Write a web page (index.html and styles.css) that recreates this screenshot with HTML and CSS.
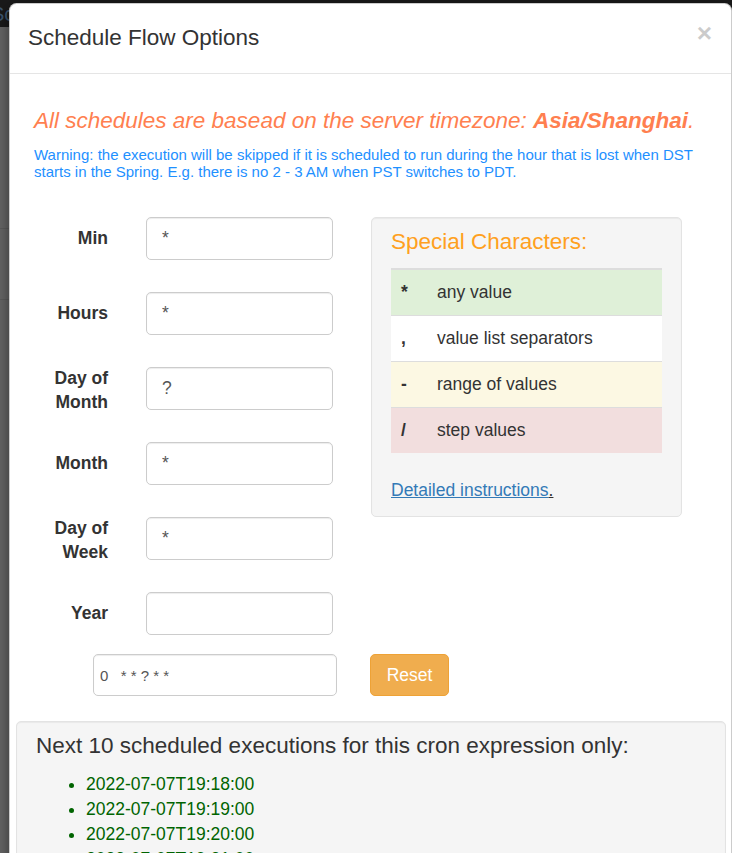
FILE: index.html
```html
<!DOCTYPE html>
<html lang="en">
<head>
<meta charset="utf-8">
<title>Schedule Flow Options</title>
<link rel="stylesheet" href="styles.css">
</head>
<body>
<div class="backdrop">
  <div class="navbar"><span class="brand">Sc</span></div>
  <div class="page">
    <div class="pg-line l1"></div>
    <div class="pg-line l2"></div>
  </div>
</div>

<div class="modal">
  <div class="modal-header">
    <h4 class="modal-title">Schedule Flow Options</h4>
    <button class="close" type="button">&times;</button>
  </div>
  <div class="modal-body">
    <div class="intro">
      <h4 class="tz">All schedules are basead on the server timezone: <b>Asia/Shanghai</b>.</h4>
      <p class="warn">Warning: the execution will be skipped if it is scheduled to run during the hour that is lost when DST starts in the Spring. E.g. there is no 2 - 3 AM when PST switches to PDT.</p>
    </div>

    <div class="cron-section">
      <div class="fields">
        <div class="field"><label>Min</label><input class="form-control" type="text" value="*"></div>
        <div class="field"><label>Hours</label><input class="form-control" type="text" value="*"></div>
        <div class="field"><label class="two">Day of Month</label><input class="form-control" type="text" value="?"></div>
        <div class="field"><label>Month</label><input class="form-control" type="text" value="*"></div>
        <div class="field"><label class="two">Day of Week</label><input class="form-control" type="text" value="*"></div>
        <div class="field"><label>Year</label><input class="form-control" type="text" value=""></div>
      </div>

      <div class="well special">
        <h4 class="special-title">Special Characters:</h4>
        <table class="chars">
          <tr class="success"><td class="ch">*</td><td>any value</td></tr>
          <tr><td class="ch">,</td><td>value list separators</td></tr>
          <tr class="warning"><td class="ch">-</td><td>range of values</td></tr>
          <tr class="danger"><td class="ch">/</td><td>step values</td></tr>
        </table>
        <p class="more"><a href="#">Detailed instructions</a><span class="dot">.</span></p>
      </div>
    </div>

    <div class="cron-row">
      <input class="cron-input" type="text" value="0   * * ? * *">
      <button class="btn-reset" type="button">Reset</button>
    </div>

    <div class="well next">
      <h4 class="next-title">Next 10 scheduled executions for this cron expression only:</h4>
      <ul class="times">
        <li>2022-07-07T19:18:00</li>
        <li>2022-07-07T19:19:00</li>
        <li>2022-07-07T19:20:00</li>
        <li>2022-07-07T19:21:00</li>
        <li>2022-07-07T19:22:00</li>
        <li>2022-07-07T19:23:00</li>
        <li>2022-07-07T19:24:00</li>
        <li>2022-07-07T19:25:00</li>
        <li>2022-07-07T19:26:00</li>
        <li>2022-07-07T19:27:00</li>
      </ul>
    </div>
  </div>
</div>
</body>
</html>
```

FILE: styles.css
```css
* { box-sizing: border-box; }

html, body {
  margin: 0;
  padding: 0;
}

body {
  height: 853px;
  overflow: hidden;
  background: #666666;
  font-family: "Liberation Sans", Arial, Helvetica, sans-serif;
  font-size: 17.5px;
  line-height: 25px;
  color: #333333;
}

/* dimmed page behind the modal */
.navbar {
  height: 27px;
  background: #1a1a1a;
  overflow: hidden;
  white-space: nowrap;
}

.brand {
  display: inline-block;
  margin-left: -9px;
  margin-top: 4px;
  font-size: 20px;
  line-height: 20px;
  color: #3c5670;
}

.page {
  padding-top: 201px;
}

.pg-line {
  height: 1px;
  background: #5c5c5c;
}

.pg-line.l2 { margin-top: 70px; }

/* modal */
.modal {
  position: absolute;
  top: 3px;
  left: 9px;
  width: 723px;
  height: 900px;
  background: #ffffff;
  border: 1px solid rgba(0, 0, 0, 0.2);
  border-radius: 7.5px;
  box-shadow: 0 5px 15px rgba(0, 0, 0, 0.5);
}

.modal-header {
  display: flex;
  justify-content: space-between;
  align-items: flex-start;
  height: 70px;
  padding: 21px 19px 0 18px;
  border-bottom: 1px solid #e5e5e5;
}

.modal-title {
  margin: 0;
  font-size: 22.5px;
  line-height: 25px;
  font-weight: normal;
  color: #333333;
}

.close {
  margin-top: -5.5px;
  padding: 0;
  border: 0;
  background: transparent;
  font-family: "Liberation Sans", Arial, sans-serif;
  font-size: 26.25px;
  line-height: 26.25px;
  font-weight: bold;
  color: #000000;
  opacity: 0.2;
}

.modal-body {
  padding: 0 5px 30px 6px;
}

.intro {
  padding: 34px 0 0 18px;
  width: 690px;
}

.tz {
  margin: 0;
  font-size: 22.5px;
  line-height: 25px;
  font-style: italic;
  font-weight: normal;
  color: #ff7f50;
}

.tz b { font-weight: bold; }

.warn {
  margin: 14px 0 0;
  font-size: 15px;
  line-height: 16.5px;
  color: #1e90ff;
}

/* cron fields + special characters */
.cron-section {
  display: flex;
  align-items: flex-start;
  margin-top: 37px;
  padding-left: 18px;
}

.fields {
  display: flex;
  flex-direction: column;
  gap: 32.5px;
  width: 299px;
}

.field {
  display: flex;
  align-items: center;
  height: 42.5px;
}

.field label {
  width: 74px;
  margin-right: 38px;
  text-align: right;
  font-weight: bold;
  line-height: 25px;
}

.field label.two {
  align-self: flex-start;
  margin-top: -1.5px;
  line-height: 24.5px;
}

.form-control {
  width: 187px;
  height: 42.5px;
  padding: 0 15px;
  border: 1px solid #cccccc;
  border-radius: 5px;
  background: #ffffff;
  box-shadow: inset 0 1px 1px rgba(0, 0, 0, 0.075);
  font-family: "Liberation Sans", Arial, sans-serif;
  font-size: 17.5px;
  color: #555555;
}

.well {
  background: #f5f5f5;
  border: 1px solid #e3e3e3;
  border-radius: 5px;
  box-shadow: inset 0 1px 1px rgba(0, 0, 0, 0.05);
}

.special {
  width: 311px;
  margin-left: 38px;
  padding: 12px 19px 13.5px;
}

.special-title {
  margin: 0 0 13.5px;
  font-size: 22.5px;
  line-height: 24.75px;
  font-weight: normal;
  color: #ffa020;
}

.chars {
  width: 100%;
  border-collapse: collapse;
  border-spacing: 0;
  margin-bottom: 24.5px;
}

.chars td {
  padding: 10px;
  line-height: 25px;
  border-top: 1px solid #dddddd;
  background: #ffffff;
}

.chars tr:first-child td { border-top-width: 2px; }

.chars td.ch {
  width: 36px;
  font-weight: bold;
}

.chars tr.success td { background: #dff0d8; }
.chars tr.warning td { background: #fcf8e3; }
.chars tr.danger td { background: #f2dede; }

.more {
  margin: 0;
  line-height: 25px;
}

.more a {
  color: #337ab7;
  text-decoration: underline;
}

.more .dot { text-decoration: underline; }

/* cron expression row */
.cron-row {
  display: flex;
  margin-top: 19.5px;
  padding-left: 77px;
}

.cron-input {
  width: 244px;
  height: 42px;
  padding: 0 6px;
  border: 1px solid #cccccc;
  border-radius: 5px;
  box-shadow: inset 0 1px 1px rgba(0, 0, 0, 0.075);
  font-family: "Liberation Sans", Arial, sans-serif;
  font-size: 15px;
  color: #555555;
  white-space: pre;
}

.btn-reset {
  width: 79px;
  height: 42px;
  margin-left: 33px;
  padding: 0;
  border: 1px solid #eea236;
  border-radius: 5px;
  background: #f0ad4e;
  font-family: "Liberation Sans", Arial, sans-serif;
  font-size: 17.5px;
  color: #ffffff;
}

/* next executions */
.next {
  margin-top: 25px;
  padding: 12px 19px 20px;
}

.next-title {
  margin: 0 0 13.5px;
  font-size: 22.5px;
  line-height: 24.75px;
  font-weight: normal;
  color: #333333;
}

.times {
  margin: 0;
  padding-left: 50px;
  color: #006400;
}

.times li { line-height: 25px; }
```
